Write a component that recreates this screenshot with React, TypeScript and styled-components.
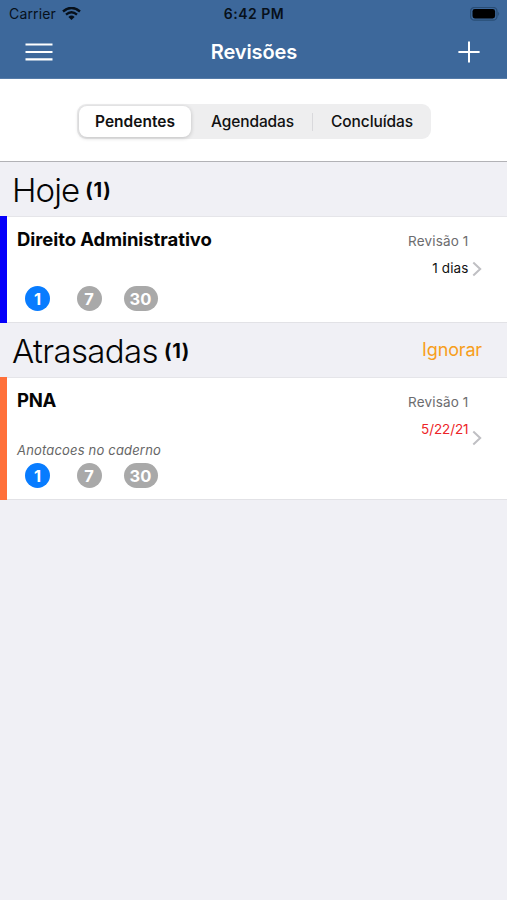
import React from "react";
import styled, { createGlobalStyle } from "styled-components";

const GlobalStyle = createGlobalStyle`
  * { box-sizing: border-box; }
  body { margin: 0; background: #f0f0f5; font-family: Inter, "Liberation Sans", sans-serif; }
  button { font: inherit; border: 0; padding: 0; margin: 0; background: none; color: inherit; }
`;

const Screen = styled.main`
  width: 507px;
  min-height: 900px;
  background: #f0f0f5;
  color: #050505;
  white-space: nowrap;
`;

const Header = styled.header`
  height: 79px;
  background: #3d689b;
  border-bottom: 1px solid #557ba8;
`;

const StatusBar = styled.div`
  height: 27px;
  display: grid;
  grid-template-columns: 1fr auto 1fr;
  align-items: center;
  padding: 1px 7px 0 9px;
  color: #07101a;
`;

const Carrier = styled.div`
  display: flex;
  align-items: center;
  gap: 6px;
  font-size: 14px;
  line-height: 20px;
  letter-spacing: 0.15px;
`;

const Clock = styled.div`
  margin-right: 1px;
  font-size: 14px;
  font-weight: 600;
  line-height: 20px;
  letter-spacing: 0.5px;
`;

const BatterySlot = styled.div`
  display: flex;
  justify-content: flex-end;
`;

const NavBar = styled.nav`
  height: 51px;
  display: grid;
  grid-template-columns: 1fr auto 1fr;
  align-items: center;
  padding: 0 27px 2px 25px;
  color: #fff;
`;

const IconButton = styled.button<{ $end?: boolean }>`
  display: flex;
  justify-self: ${(p) => (p.$end ? "end" : "start")};
`;

const NavTitle = styled.h1`
  margin: 1px 0 0 3px;
  font-size: 20px;
  font-weight: 600;
  line-height: 26px;
  letter-spacing: -0.1px;
`;

const FilterBar = styled.div`
  height: 83px;
  padding-top: 25px;
  display: flex;
  justify-content: center;
  align-items: flex-start;
  background: #fff;
  border-bottom: 1px solid #b2b2b6;
`;

const Segmented = styled.div`
  width: 354px;
  height: 35px;
  margin-left: 1px;
  padding: 2px;
  border-radius: 9px;
  background: #eeeeef;
  display: grid;
  grid-template-columns: 112px 121px 1px 1fr;
  align-items: center;
`;

const Segment = styled.button<{ $active?: boolean; $tracking: number }>`
  height: 31px;
  padding-left: ${(p) => (p.$active ? 0 : 2)}px;
  border-radius: 8px;
  background: ${(p) => (p.$active ? "#fff" : "transparent")};
  box-shadow: ${(p) => (p.$active ? "0 1px 4px rgba(0,0,0,.2)" : "none")};
  font-size: 15.5px;
  font-weight: ${(p) => (p.$active ? 600 : 500)};
  letter-spacing: ${(p) => p.$tracking}px;
  color: #111;
`;

const Divider = styled.i`
  height: 18px;
  background: #d9d9dc;
`;

const SectionHead = styled.header`
  height: 54px;
  display: flex;
  align-items: center;
  padding: 0 25px 0 12px;
`;

const SectionTitle = styled.h2<{ $tracking: number }>`
  margin: 1px 0 0;
  font-size: 33px;
  font-weight: 300;
  line-height: 40px;
  letter-spacing: ${(p) => p.$tracking}px;
`;

const SectionCount = styled.span`
  margin: 2px 0 0 6px;
  font-size: 20px;
  font-weight: 700;
  line-height: 24px;
  letter-spacing: 0.7px;
`;

const Ignore = styled.button`
  margin-left: auto;
  font-size: 18px;
  line-height: 24px;
  letter-spacing: -0.15px;
  color: #f79e1b;
`;

const Row = styled.article<{ $height: number; $color: string }>`
  height: ${(p) => p.$height}px;
  display: flex;
  background: #fff;
  border-left: 7px solid ${(p) => p.$color};
  box-shadow: inset 0 1px #e5e5e9, inset 0 -1px #e2e2e6;
`;

const RowMain = styled.div`
  flex: 1;
  display: flex;
  flex-direction: column;
  padding: 10px 0 12px 10px;
`;

const Subject = styled.h3<{ $tracking: number }>`
  margin: 0;
  font-size: 18.5px;
  font-weight: 700;
  line-height: 26px;
  letter-spacing: ${(p) => p.$tracking}px;
`;

const RowBottom = styled.div`
  margin-top: auto;
`;

const Note = styled.p`
  margin: 0 0 4px;
  font-size: 13px;
  font-style: italic;
  line-height: 18px;
  letter-spacing: 0.18px;
  color: #666;
`;

const Intervals = styled.div`
  display: flex;
  padding-left: 8px;
`;

const Pill = styled.span<{ $active?: boolean; $wide?: boolean }>`
  width: ${(p) => (p.$wide ? 34 : 25)}px;
  height: 25px;
  margin-right: ${(p) => (p.$active ? 26.5 : 22)}px;
  border-radius: 13px;
  display: flex;
  align-items: center;
  justify-content: center;
  background: ${(p) => (p.$active ? "#087cff" : "#a9a9a9")};
  color: #fff;
  font-size: 16.5px;
  font-weight: 700;
`;

const RowSide = styled.div`
  display: flex;
  flex-direction: column;
  align-items: flex-end;
  padding-top: 16px;
`;

const ReviewLabel = styled.span`
  font-size: 13.5px;
  line-height: 18px;
  letter-spacing: 0.15px;
  color: #6c6c6e;
`;

const Due = styled.span<{ $late?: boolean }>`
  margin-top: 9px;
  font-size: 13.5px;
  line-height: 18px;
  letter-spacing: ${(p) => (p.$late ? -0.1 : 0.1)}px;
  color: ${(p) => (p.$late ? "#ed2427" : "#111")};
`;

const Disclosure = styled.div`
  width: 38.5px;
  padding-left: 3px;
  padding-bottom: 1px;
  display: flex;
  align-items: center;
`;

const WifiIcon = () => (
  <svg width="19" height="14" viewBox="0 0 19 14" fill="none" stroke="currentColor" strokeWidth="2.4">
    <path d="M1 4.5Q9.5-2.7 18 4.5M4 7.7Q9.5 3 15 7.7" />
    <path d="M6.4 9.9Q9.5 7.2 12.6 9.9L9.5 13.1Z" fill="currentColor" stroke="none" />
  </svg>
);

const BatteryIcon = () => (
  <svg width="30" height="15" viewBox="0 0 30 15">
    <rect x=".6" y=".4" width="26.4" height="12.8" rx="4" fill="none" stroke="#294d75" strokeWidth="1.3" />
    <rect x="2.5" y="2.1" width="22.6" height="9.3" rx="2.4" fill="#000" />
    <path d="M28.2 4.7Q30.2 6.8 28.2 8.9Z" fill="#294d75" />
  </svg>
);

const MenuIcon = () => (
  <svg width="28" height="20" viewBox="0 0 28 20" stroke="currentColor" strokeWidth="2.2">
    <path d="M.5 2.5h27M.5 10h27M.5 17.3h27" />
  </svg>
);

const PlusIcon = () => (
  <svg width="22" height="22" viewBox="0 0 22 22" stroke="currentColor" strokeWidth="2">
    <path d="M.4 11h21.2M11 .4v21.2" />
  </svg>
);

const ChevronIcon = () => (
  <svg width="10" height="16" viewBox="0 0 10 16" fill="none" stroke="#bfbfc3" strokeWidth="2">
    <path d="M1.3 1.5 8.2 8 1.3 14.5" />
  </svg>
);

interface Review {
  subject: string;
  due: string;
  color: string;
  height: number;
  tracking: number;
  late?: boolean;
  note?: string;
}

const ReviewRow = ({ subject, due, color, height, tracking, late, note }: Review) => (
  <Row $height={height} $color={color}>
    <RowMain>
      <Subject $tracking={tracking}>{subject}</Subject>
      <RowBottom>
        {note && <Note>{note}</Note>}
        <Intervals>
          <Pill $active>1</Pill>
          <Pill>7</Pill>
          <Pill $wide>30</Pill>
        </Intervals>
      </RowBottom>
    </RowMain>
    <RowSide>
      <ReviewLabel>Revisão 1</ReviewLabel>
      <Due $late={late}>{due}</Due>
    </RowSide>
    <Disclosure><ChevronIcon /></Disclosure>
  </Row>
);

export default function App() {
  return (
    <>
      <GlobalStyle />
      <Screen>
        <Header>
          <StatusBar>
            <Carrier>Carrier <WifiIcon /></Carrier>
            <Clock>6:42 PM</Clock>
            <BatterySlot><BatteryIcon /></BatterySlot>
          </StatusBar>
          <NavBar>
            <IconButton aria-label="Menu"><MenuIcon /></IconButton>
            <NavTitle>Revisões</NavTitle>
            <IconButton $end aria-label="Adicionar"><PlusIcon /></IconButton>
          </NavBar>
        </Header>
        <FilterBar>
          <Segmented>
            <Segment $active $tracking={0}>Pendentes</Segment>
            <Segment $tracking={-0.1}>Agendadas</Segment>
            <Divider />
            <Segment $tracking={-0.1}>Concluídas</Segment>
          </Segmented>
        </FilterBar>
        <section>
          <SectionHead>
            <SectionTitle $tracking={-0.9}>Hoje</SectionTitle>
            <SectionCount>(1)</SectionCount>
          </SectionHead>
          <ReviewRow subject="Direito Administrativo" due="1 dias" color="#0500fa" height={107} tracking={-0.07} />
        </section>
        <section>
          <SectionHead>
            <SectionTitle $tracking={-0.65}>Atrasadas</SectionTitle>
            <SectionCount>(1)</SectionCount>
            <Ignore>Ignorar</Ignore>
          </SectionHead>
          <ReviewRow subject="PNA" due="5/22/21" color="#ff703a" height={123} tracking={-0.3} late note="Anotacoes no caderno" />
        </section>
      </Screen>
    </>
  );
}
